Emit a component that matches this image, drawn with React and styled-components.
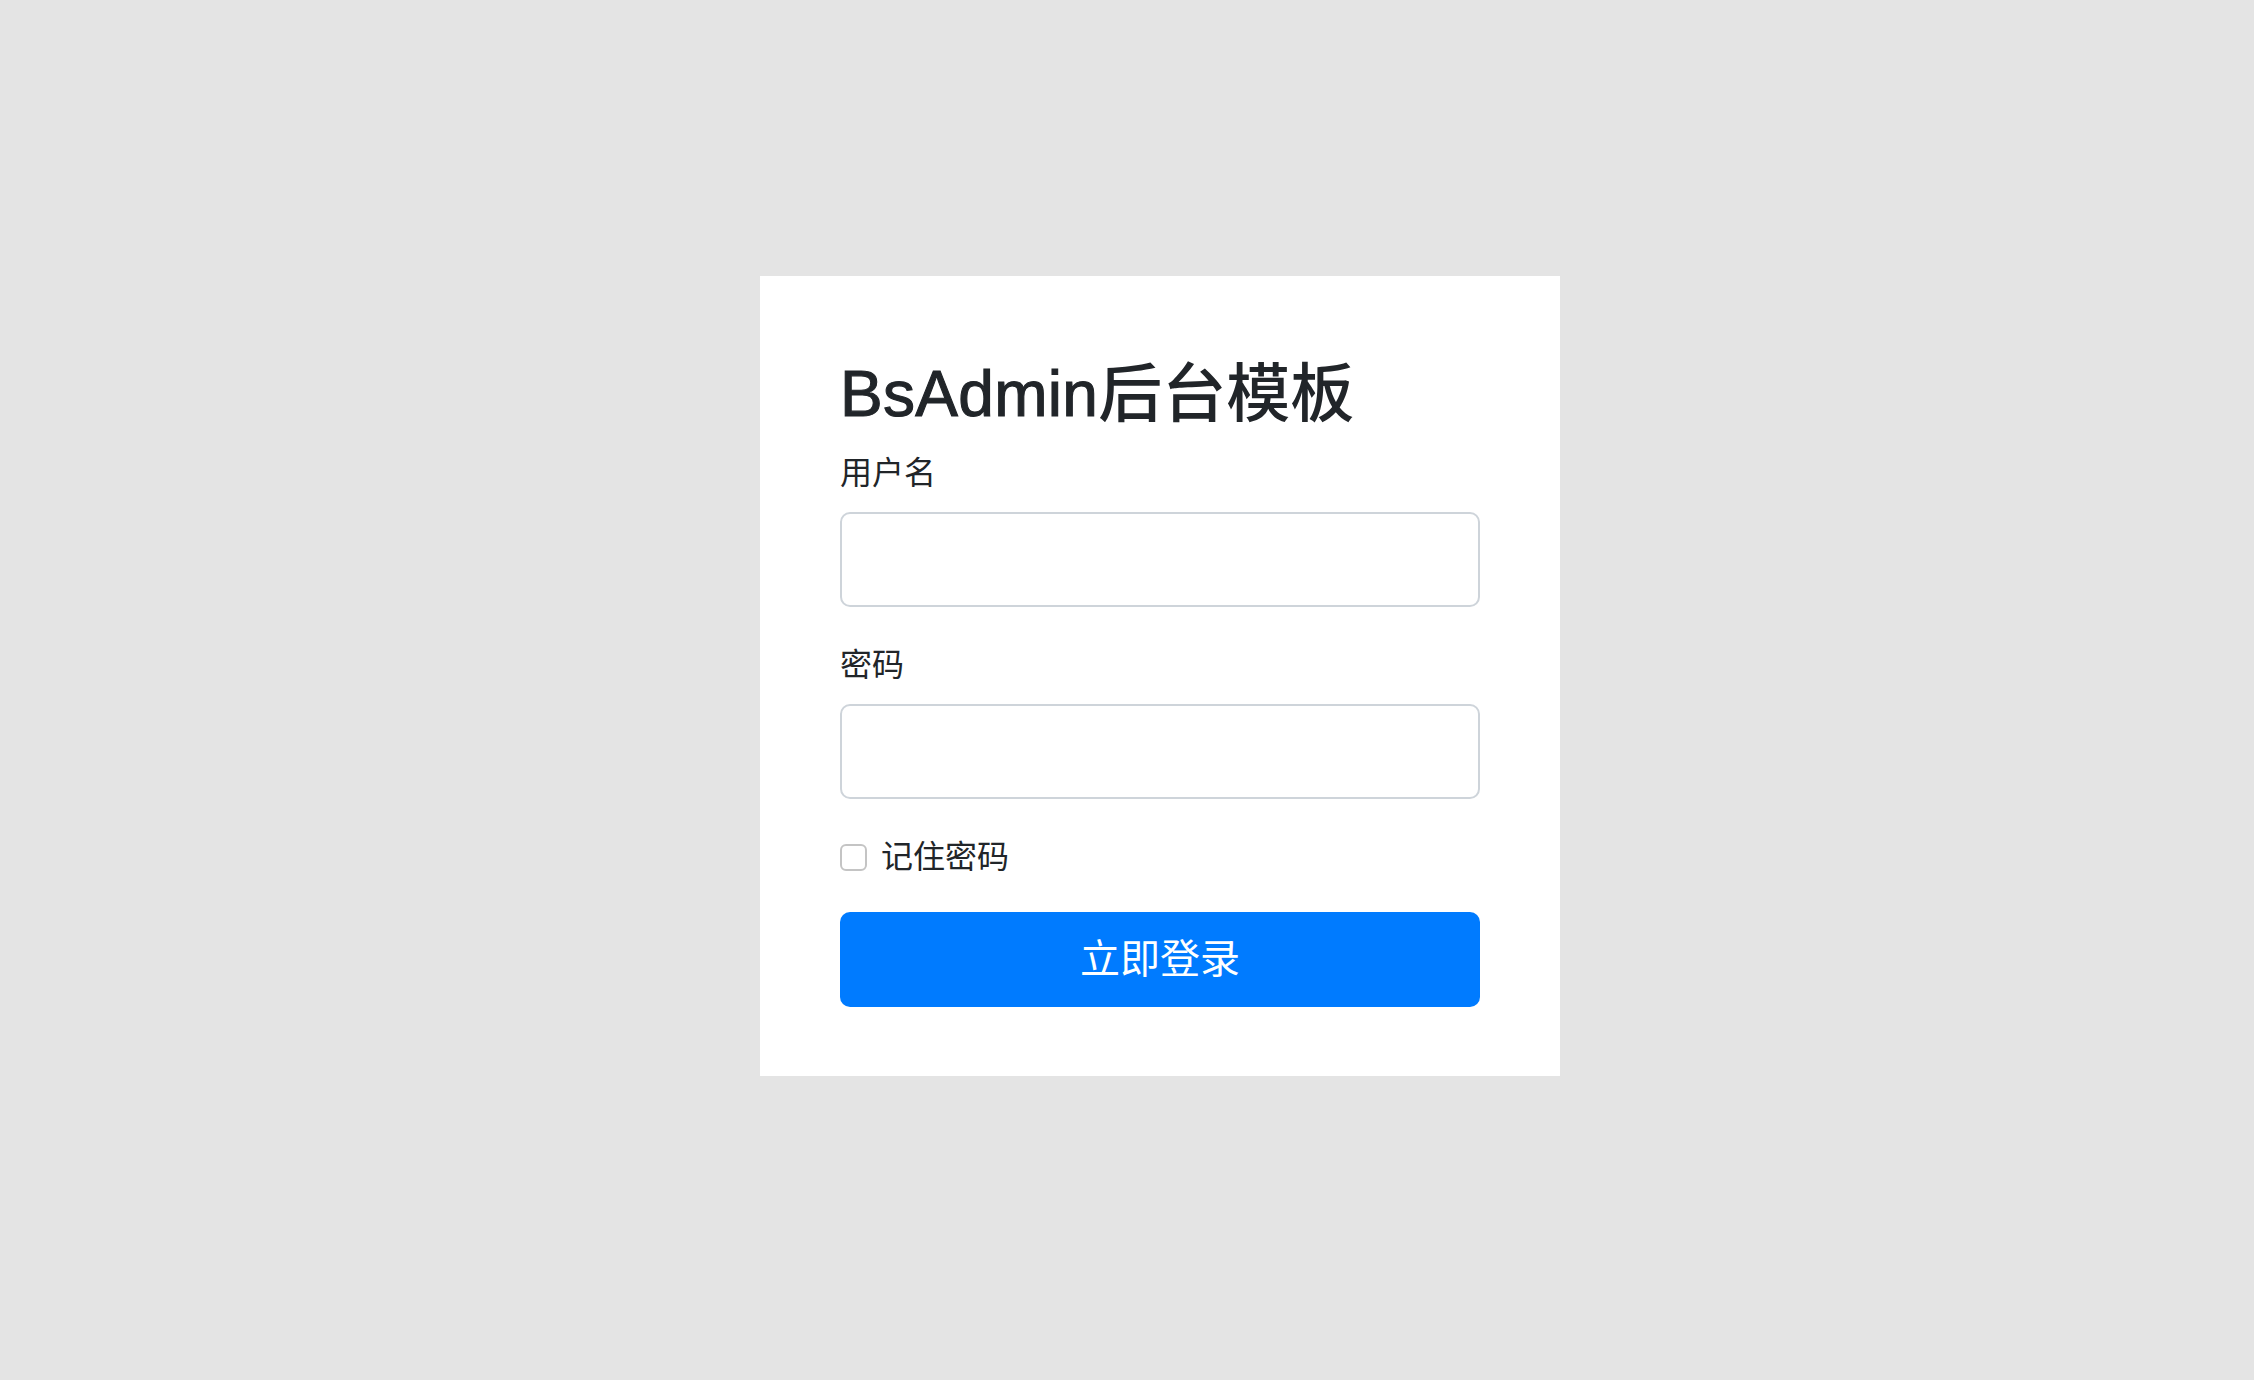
import React from 'react';
import styled, { createGlobalStyle } from 'styled-components';

const GlobalStyle = createGlobalStyle`
  html, body {
    margin: 0;
    padding: 0;
    background: #e4e4e4;
  }
  body {
    font-family: "Liberation Sans", "Noto Sans CJK SC", sans-serif;
    color: #212529;
  }
`;

const Page = styled.div`
  min-height: 1380px;
  box-sizing: border-box;
  padding: 276px 0 0 760px;
`;

const Card = styled.form`
  width: 800px;
  box-sizing: border-box;
  background: #fff;
  padding: 80px 80px 69px;
  display: flex;
  flex-direction: column;
`;

const Title = styled.h1`
  margin: 0 0 16px;
  font-size: 64px;
  line-height: 76.8px;
  font-weight: 500;
  color: #212529;
`;

// Liberation Sans has no medium weight, thicken the latin part a little
const Brand = styled.span`
  -webkit-text-stroke: 1.1px #212529;
  letter-spacing: 0.3px;
`;

const Field = styled.div`
  display: flex;
  flex-direction: column;
  margin-bottom: ${p => p.$gap || 34}px;
`;

const Label = styled.label`
  font-size: 32px;
  line-height: 48px;
  margin-bottom: 15px;
`;

const Input = styled.input`
  box-sizing: border-box;
  width: 640px;
  height: 95px;
  border: 2px solid #ced4da;
  border-radius: 10px;
  padding: 0 32px;
  font-size: 40px;
  font-family: inherit;
  outline: none;
  background: #fff;
`;

const CheckRow = styled.label`
  display: flex;
  align-items: center;
  height: 48px;
  font-size: 32px;
  line-height: 48px;
  margin-bottom: 31px;
`;

const Check = styled.input`
  appearance: none;
  -webkit-appearance: none;
  box-sizing: border-box;
  width: 27px;
  height: 27px;
  margin: 2px 14px 0 0;
  border: 2px solid #c4c4c4;
  border-radius: 6px;
  background: #fff;
`;

const Button = styled.button`
  width: 640px;
  height: 95px;
  border: none;
  border-radius: 10px;
  background: #007bff;
  color: #fff;
  font-size: 40px;
  font-family: inherit;
  line-height: 60px;
  cursor: pointer;
`;

export default function App() {
  return (
    <>
      <GlobalStyle />
      <Page>
        <Card onSubmit={e => e.preventDefault()}>
          <Title><Brand>BsAdmin</Brand>后台模板</Title>
          <Field>
            <Label htmlFor="username">用户名</Label>
            <Input id="username" type="text" />
          </Field>
          <Field>
            <Label htmlFor="password">密码</Label>
            <Input id="password" type="password" />
          </Field>
          <CheckRow>
            <Check type="checkbox" />
            记住密码
          </CheckRow>
          <Button type="submit">立即登录</Button>
        </Card>
      </Page>
    </>
  );
}
